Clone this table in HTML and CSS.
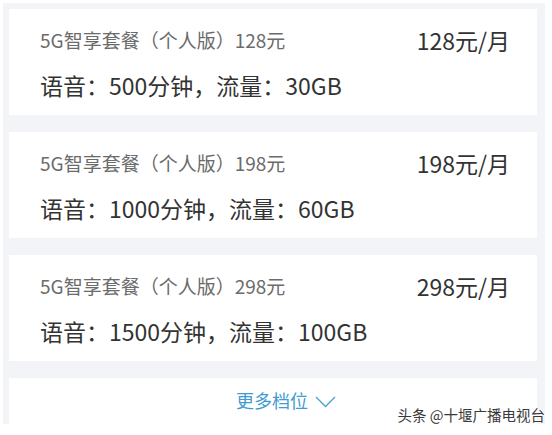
FILE: index.html
```html
<!DOCTYPE html>
<html lang="zh-CN">
<head>
    <meta charset="UTF-8">
    <meta name="viewport" content="width=device-width, initial-scale=1.0">
    <title>5G智享套餐</title>
    <link rel="stylesheet" href="styles.css">
</head>
<body>
    <div class="panel">
        <div class="plan">
            <div class="plan-info">
                <div class="plan-name">5G智享套餐（个人版）128元</div>
                <div class="plan-spec">语音：500分钟，流量：30GB</div>
            </div>
            <div class="plan-price">128元/月</div>
        </div>
        <div class="plan">
            <div class="plan-info">
                <div class="plan-name">5G智享套餐（个人版）198元</div>
                <div class="plan-spec">语音：1000分钟，流量：60GB</div>
            </div>
            <div class="plan-price">198元/月</div>
        </div>
        <div class="plan">
            <div class="plan-info">
                <div class="plan-name">5G智享套餐（个人版）298元</div>
                <div class="plan-spec">语音：1500分钟，流量：100GB</div>
            </div>
            <div class="plan-price">298元/月</div>
        </div>
        <div class="more">
            <span>更多档位</span>
            <svg class="more-arrow" width="21" height="12" viewBox="0 0 21 12">
                <polyline points="1,1 10.5,10.5 20,1" fill="none" stroke="#4a9fd6" stroke-width="1.3"/>
            </svg>
        </div>
    </div>
    <div class="mark">头条 @十堰广播电视台</div>
</body>
</html>
```

FILE: styles.css
```css
body{
    margin: 0;
    background: #fff;
    font-family: "Noto Sans CJK SC", "Noto Sans", sans-serif;
    position: relative;
    width: 552px;
    height: 435px;
    overflow: hidden;
}
.panel{
    margin: 3px 0 0 3px;
    width: 542px;
    height: 421px;
    padding: 6px 8px 0 6px;
    box-sizing: border-box;
    background: #f3f4f7;
    display: flex;
    flex-direction: column;
    gap: 17px;
    overflow: hidden;
}
.plan{
    background: #fff;
    height: 106px;
    flex-shrink: 0;
    box-sizing: border-box;
    padding: 18px 27px 0 31px;
    display: flex;
    justify-content: space-between;
}
.plan-name{
    font-size: 19px;
    line-height: 26px;
    color: #6b6b6b;
}
.plan-spec{
    margin-top: 16px;
    font-size: 23px;
    line-height: 32px;
    color: #333;
}
.plan-price{
    font-size: 23px;
    line-height: 26px;
    color: #333;
}
.more{
    background: #fff;
    flex: 1;
    padding: 9px 0 0 26px;
    display: flex;
    justify-content: center;
    align-items: flex-start;
    gap: 7px;
    color: #3f9bd4;
    font-size: 18px;
    line-height: 26px;
}
.more-arrow{
    margin-top: 9px;
}
.mark{
    position: absolute;
    right: 7px;
    top: 404px;
    font-size: 14.5px;
    line-height: 22px;
    color: #3a3a3a;
    text-shadow: 0 0 2px #fff, 0 0 2px #fff;
}
```
